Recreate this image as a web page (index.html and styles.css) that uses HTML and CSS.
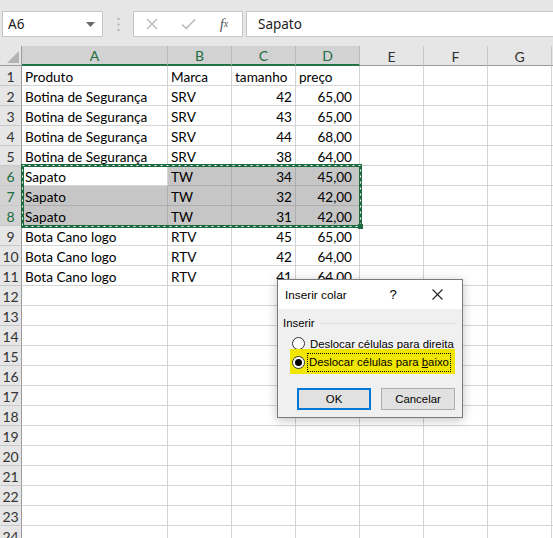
FILE: index.html
```html
<!DOCTYPE html>
<html lang="pt">
<head>
<meta charset="utf-8">
<title>Inserir colar</title>
<link rel="stylesheet" href="styles.css">
</head>
<body>
<div class="app">
  <div class="toolbar">
    <div class="namebox"><span>A6</span>
      <svg class="dd" width="9" height="5" viewBox="0 0 9 5"><path d="M0 0h9L4.5 5z" fill="#6a6a6a"/></svg>
    </div>
    <div class="dots">
      <svg width="3" height="13" viewBox="0 0 3 13"><rect x="0.5" y="0" width="2" height="2" fill="#b0b0b0"/><rect x="0.5" y="5.5" width="2" height="2" fill="#b0b0b0"/><rect x="0.5" y="11" width="2" height="2" fill="#b0b0b0"/></svg>
    </div>
    <div class="fxbox">
      <span class="ic"><svg width="12" height="12" viewBox="0 0 12 12"><path d="M1 1L11 11M11 1L1 11" stroke="#b8b8b8" stroke-width="1.4"/></svg></span>
      <span class="ic"><svg width="15" height="12" viewBox="0 0 15 12"><path d="M1 6.5L5.2 10.5L14 1.5" stroke="#b8b8b8" stroke-width="1.6" fill="none"/></svg></span>
      <span class="ic fx">f<sub>x</sub></span>
    </div>
    <div class="formula">Sapato</div>
  </div>

  <div class="grid">
    <div class="hd corner"><svg width="12" height="12" viewBox="0 0 12 12"><path d="M12 0V12H0z" fill="#b4b4b4"/></svg></div>
    <div class="hd on">A</div><div class="hd on">B</div><div class="hd on">C</div><div class="hd on">D</div>
    <div class="hd">E</div><div class="hd">F</div><div class="hd">G</div><div class="hd"></div>

    <div class="rh">1</div><div class="c">Produto</div><div class="c">Marca</div><div class="c">tamanho</div><div class="c">preço</div><div class="c"></div><div class="c"></div><div class="c"></div><div class="c"></div>
    <div class="rh">2</div><div class="c">Botina de Segurança</div><div class="c">SRV</div><div class="c n">42</div><div class="c n d">65,00</div><div class="c"></div><div class="c"></div><div class="c"></div><div class="c"></div>
    <div class="rh">3</div><div class="c">Botina de Segurança</div><div class="c">SRV</div><div class="c n">43</div><div class="c n d">65,00</div><div class="c"></div><div class="c"></div><div class="c"></div><div class="c"></div>
    <div class="rh">4</div><div class="c">Botina de Segurança</div><div class="c">SRV</div><div class="c n">44</div><div class="c n d">68,00</div><div class="c"></div><div class="c"></div><div class="c"></div><div class="c"></div>
    <div class="rh">5</div><div class="c">Botina de Segurança</div><div class="c">SRV</div><div class="c n">38</div><div class="c n d">64,00</div><div class="c"></div><div class="c"></div><div class="c"></div><div class="c"></div>
    <div class="rh on">6</div><div class="c">Sapato</div><div class="c s">TW</div><div class="c s n">34</div><div class="c s n d">45,00</div><div class="c"></div><div class="c"></div><div class="c"></div><div class="c"></div>
    <div class="rh on">7</div><div class="c s">Sapato</div><div class="c s">TW</div><div class="c s n">32</div><div class="c s n d">42,00</div><div class="c"></div><div class="c"></div><div class="c"></div><div class="c"></div>
    <div class="rh on">8</div><div class="c s">Sapato</div><div class="c s">TW</div><div class="c s n">31</div><div class="c s n d">42,00</div><div class="c"></div><div class="c"></div><div class="c"></div><div class="c"></div>
    <div class="rh">9</div><div class="c">Bota Cano logo</div><div class="c">RTV</div><div class="c n">45</div><div class="c n d">65,00</div><div class="c"></div><div class="c"></div><div class="c"></div><div class="c"></div>
    <div class="rh">10</div><div class="c">Bota Cano logo</div><div class="c">RTV</div><div class="c n">42</div><div class="c n d">64,00</div><div class="c"></div><div class="c"></div><div class="c"></div><div class="c"></div>
    <div class="rh">11</div><div class="c">Bota Cano logo</div><div class="c">RTV</div><div class="c n">41</div><div class="c n d">64,00</div><div class="c"></div><div class="c"></div><div class="c"></div><div class="c"></div>
    <div class="rh">12</div><div class="c"></div><div class="c"></div><div class="c"></div><div class="c"></div><div class="c"></div><div class="c"></div><div class="c"></div><div class="c"></div>
    <div class="rh">13</div><div class="c"></div><div class="c"></div><div class="c"></div><div class="c"></div><div class="c"></div><div class="c"></div><div class="c"></div><div class="c"></div>
    <div class="rh">14</div><div class="c"></div><div class="c"></div><div class="c"></div><div class="c"></div><div class="c"></div><div class="c"></div><div class="c"></div><div class="c"></div>
    <div class="rh">15</div><div class="c"></div><div class="c"></div><div class="c"></div><div class="c"></div><div class="c"></div><div class="c"></div><div class="c"></div><div class="c"></div>
    <div class="rh">16</div><div class="c"></div><div class="c"></div><div class="c"></div><div class="c"></div><div class="c"></div><div class="c"></div><div class="c"></div><div class="c"></div>
    <div class="rh">17</div><div class="c"></div><div class="c"></div><div class="c"></div><div class="c"></div><div class="c"></div><div class="c"></div><div class="c"></div><div class="c"></div>
    <div class="rh">18</div><div class="c"></div><div class="c"></div><div class="c"></div><div class="c"></div><div class="c"></div><div class="c"></div><div class="c"></div><div class="c"></div>
    <div class="rh">19</div><div class="c"></div><div class="c"></div><div class="c"></div><div class="c"></div><div class="c"></div><div class="c"></div><div class="c"></div><div class="c"></div>
    <div class="rh">20</div><div class="c"></div><div class="c"></div><div class="c"></div><div class="c"></div><div class="c"></div><div class="c"></div><div class="c"></div><div class="c"></div>
    <div class="rh">21</div><div class="c"></div><div class="c"></div><div class="c"></div><div class="c"></div><div class="c"></div><div class="c"></div><div class="c"></div><div class="c"></div>
    <div class="rh">22</div><div class="c"></div><div class="c"></div><div class="c"></div><div class="c"></div><div class="c"></div><div class="c"></div><div class="c"></div><div class="c"></div>
    <div class="rh">23</div><div class="c"></div><div class="c"></div><div class="c"></div><div class="c"></div><div class="c"></div><div class="c"></div><div class="c"></div><div class="c"></div>
    <div class="rh">24</div><div class="c"></div><div class="c"></div><div class="c"></div><div class="c"></div><div class="c"></div><div class="c"></div><div class="c"></div><div class="c"></div>
  </div>

  <svg class="ants" width="342" height="65" viewBox="0 0 342 65">
    <rect x="1.5" y="1.5" width="338" height="61" fill="none" stroke="#1e6b41" stroke-width="3"/>
    <rect x="1.5" y="1.5" width="338" height="61" fill="none" stroke="#fff" stroke-width="1" stroke-dasharray="2 4"/>
    <rect x="337" y="60" width="5" height="5" fill="#1e6b41"/>
  </svg>

  <div class="dialog">
    <div class="dtitle">
      <span class="dname">Inserir colar</span>
      <span class="help">?</span>
      <span class="close"><svg width="11" height="11" viewBox="0 0 11 11"><path d="M0.5 0.5L10.5 10.5M10.5 0.5L0.5 10.5" stroke="#222" stroke-width="1.1"/></svg></span>
    </div>
    <div class="dbody">
      <div class="group"><span>Inserir</span><span class="rule"></span></div>
      <div class="opt"><span class="radio"></span><span class="otext">Deslocar células para <u>d</u>ireita</span></div>
      <div class="opt hl"><span class="radio checked"></span><span class="otext focus">Deslocar células para <u>b</u>aixo</span></div>
      <div class="buttons">
        <button class="btn primary">OK</button>
        <button class="btn">Cancelar</button>
      </div>
    </div>
  </div>
</div>
</body>
</html>
```

FILE: styles.css
```css
* { box-sizing: border-box; }
body {
  margin: 0;
  background: #fff;
  font-family: Lato, "Liberation Sans", sans-serif;
  color: #000;
}
.app {
  position: relative;
  width: 553px;
  height: 538px;
  overflow: hidden;
}

/* formula bar */
.toolbar {
  height: 46px;
  background: #e6e6e6;
  display: flex;
  align-items: flex-start;
  padding-top: 11px;
}
.namebox {
  margin-left: 2px;
  width: 101px;
  height: 26px;
  background: #fff;
  border: 1px solid #c6c6c6;
  display: flex;
  align-items: center;
  justify-content: space-between;
  padding: 0 7px 0 5px;
  font-family: "Noto Sans", "Liberation Sans", sans-serif;
  font-size: 13.5px;
  color: #222;
}
.dots {
  width: 30px;
  height: 26px;
  display: flex;
  align-items: center;
  justify-content: center;
}
.fxbox {
  width: 110px;
  height: 26px;
  background: #fff;
  border: 1px solid #c6c6c6;
  display: flex;
  align-items: center;
}
.ic {
  width: 36px;
  display: flex;
  justify-content: center;
  align-items: center;
}
.fx {
  font-family: "Liberation Serif", serif;
  font-style: italic;
  font-size: 15px;
  color: #555;
  line-height: 1;
}
.fx sub { font-size: 10px; vertical-align: -2px; }
.formula {
  margin-left: 3px;
  flex: 1;
  height: 26px;
  background: #fff;
  border: 1px solid #c6c6c6;
  border-right: none;
  padding-left: 11px;
  display: flex;
  align-items: center;
  font-family: "Noto Sans", "Liberation Sans", sans-serif;
  font-size: 13.5px;
  color: #222;
}

/* sheet */
.grid {
  display: grid;
  grid-template-columns: 22px 146px repeat(6, 64px) 1fr;
  grid-auto-rows: 20px;
}
.hd {
  background: #e6e6e6;
  border-right: 1px solid #c8c8c8;
  border-bottom: 1px solid #9b9b9b;
  text-align: center;
  font-size: 14px;
  padding-top: 2px;
  line-height: 17px;
  color: #333;
}
.hd.on {
  background: #d2d2d2;
  border-bottom: 2px solid #217346;
  color: #1d6b40;
  line-height: 16px;
  border-right-color: #b9b9b9;
}
.corner {
  display: flex;
  align-items: flex-end;
  justify-content: flex-end;
  padding: 0 2px 2px 0;
  border-right-color: #9b9b9b;
}
.rh {
  background: #e6e6e6;
  border-right: 1px solid #9b9b9b;
  border-bottom: 1px solid #c8c8c8;
  text-align: center;
  font-size: 14px;
  padding-top: 2px;
  line-height: 18px;
  color: #333;
}
.rh.on {
  background: #d2d2d2;
  color: #1d6b40;
}
.c {
  border-right: 1px solid #d4d4d4;
  border-bottom: 1px solid #d4d4d4;
  padding: 2px 3px 0;
  white-space: nowrap;
  overflow: hidden;
  font-size: 13.6px;
  line-height: 18px;
}
.c.n { text-align: right; }
.c.d { padding-right: 7px; }
.c.s {
  background: #c6c6c6;
  border-color: #adadad;
}

/* copy marquee */
.ants {
  position: absolute;
  left: 21px;
  top: 164px;
  display: block;
}

/* dialog */
.dialog {
  position: absolute;
  left: 277px;
  top: 279px;
  width: 186px;
  height: 139px;
  border: 1px solid #7b7b7b;
  background: #f0f0f0;
  box-shadow: 0 2px 10px rgba(0,0,0,0.25);
  font-family: "Liberation Sans", Arial, sans-serif;
  font-size: 11.4px;
  color: #000;
  display: flex;
  flex-direction: column;
}
.dtitle {
  height: 29px;
  background: #fff;
  display: flex;
  align-items: center;
  padding-left: 7px;
  font-size: 11.8px;
}
.dname { flex: 1; }
.help {
  width: 20px;
  text-align: center;
  font-size: 13px;
  margin-right: 29px;
}
.close {
  width: 11px;
  height: 11px;
  display: flex;
  margin-right: 19px;
}
.dbody {
  padding: 6px 6px 0 5px;
  display: flex;
  flex-direction: column;
}
.group {
  display: flex;
  align-items: center;
  height: 16px;
}
.rule {
  flex: 1;
  height: 1px;
  background: #dcdcdc;
  margin-left: 5px;
}
.opt {
  display: flex;
  align-items: center;
  height: 17px;
  margin-left: 7px;
  padding-left: 2px;
  width: 165px;
  margin-top: 4px;
}
.opt.hl {
  background: #f0e600;
  height: 25px;
  margin-top: -3px;
  padding-top: 2px;
}
.radio {
  width: 13px;
  height: 13px;
  border: 1px solid #333;
  border-radius: 50%;
  background: #fff;
  display: flex;
  align-items: center;
  justify-content: center;
  flex: none;
}
.radio.checked::after {
  content: "";
  width: 7px;
  height: 7px;
  border-radius: 50%;
  background: #000;
}
.otext {
  margin-left: 4px;
  white-space: nowrap;
  padding: 0 1px;
}
.otext.focus {
  outline: 1px dotted #000;
  margin-left: 3px;
  padding: 0 1px;
  line-height: 17px;
}
.buttons {
  display: flex;
  gap: 10px;
  margin-top: 14px;
  margin-left: 14px;
}
.btn {
  width: 74px;
  height: 22px;
  background: #e1e1e1;
  border: 1px solid #adadad;
  font-family: "Liberation Sans", Arial, sans-serif;
  font-size: 11.4px;
  color: #000;
  padding: 0;
}
.btn.primary {
  border: 2px solid #0078d7;
}
```
